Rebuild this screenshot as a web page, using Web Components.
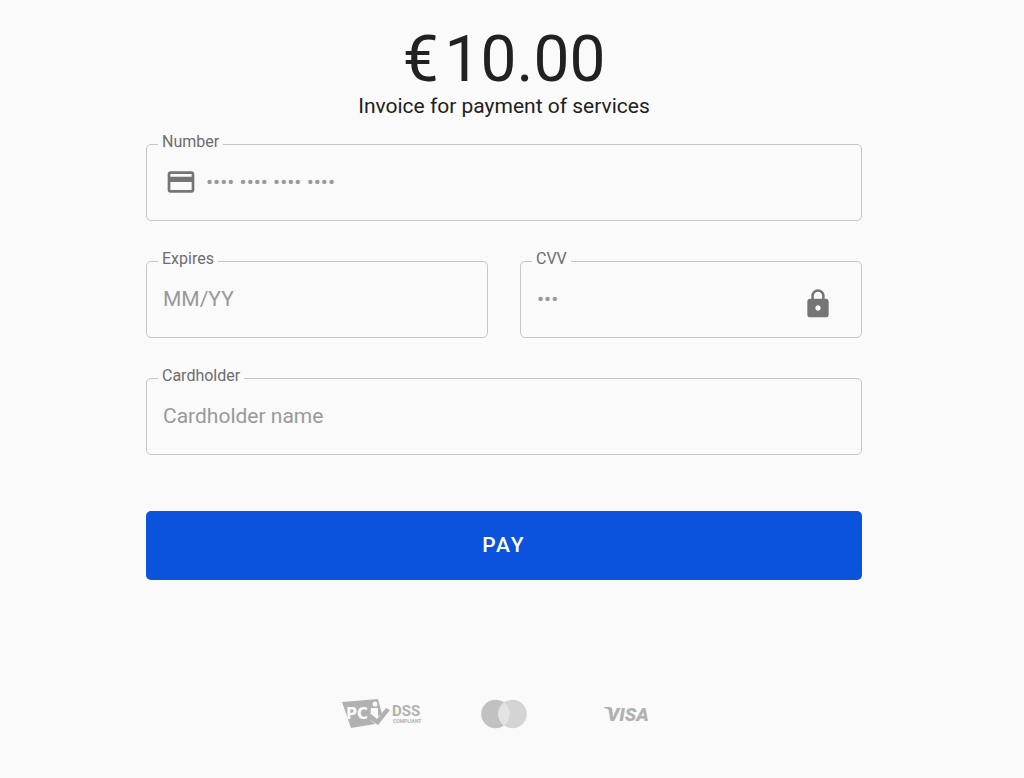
<!DOCTYPE html>
<html lang="en">
<head>
<meta charset="utf-8">
<meta name="viewport" content="width=device-width, initial-scale=1">
<title>Payment</title>
<style>
  body { margin: 0; background: #fafafa; color: #212121; font-family: Roboto, sans-serif; }
</style>
</head>
<body>
<payment-page>
  <invoice-summary slot="summary" currency="€" amount="10.00">Invoice for payment of services</invoice-summary>
  <text-field label="Number" placeholder="•••• •••• •••• ••••" class="wide" mode="numeric">
    <card-icon slot="lead"></card-icon>
  </text-field>
  <text-field label="Expires" placeholder="MM/YY" mode="numeric"></text-field>
  <text-field label="CVV" placeholder="•••" mode="numeric">
    <lock-icon slot="trail"></lock-icon>
  </text-field>
  <text-field label="Cardholder" placeholder="Cardholder name" class="wide"></text-field>
  <pay-button slot="action">PAY</pay-button>
  <brand-strip slot="brands"></brand-strip>
</payment-page>

<script>
class Base extends HTMLElement {
  constructor() {
    super();
    this.attachShadow({ mode: "open" });
  }
  connectedCallback() {
    this.shadowRoot.innerHTML = this.render();
  }
}

customElements.define("payment-page", class extends Base {
  render() {
    return `<style>
      :host { display: block; padding: 28px 32px 40px 16px; }
      main { max-width: 716px; margin: 0 auto; }
      form { display: grid; grid-template-columns: 1fr 1fr; gap: 40px 32px; margin-top: 24px; }
      ::slotted(.wide) { grid-column: 1 / -1; }
      .action { margin-top: 56px; }
      .brands { margin-top: 117px; }
    </style>
    <main>
      <slot name="summary"></slot>
      <form><slot></slot></form>
      <div class="action"><slot name="action"></slot></div>
      <div class="brands"><slot name="brands"></slot></div>
    </main>`;
  }
});

customElements.define("invoice-summary", class extends Base {
  render() {
    return `<style>
      :host { display: block; text-align: center; }
      h1 { display: flex; justify-content: center; gap: 6px; margin: 0; font-size: 64px; line-height: 64px; font-weight: 400; }
      p { margin: 0; font-size: 21px; line-height: 28px; }
    </style>
    <h1><span>${this.getAttribute("currency")}</span><span>${this.getAttribute("amount")}</span></h1>
    <p><slot></slot></p>`;
  }
});

customElements.define("text-field", class extends Base {
  render() {
    return `<style>
      :host { display: block; min-width: 0; }
      .box { position: relative; display: flex; align-items: center; box-sizing: border-box; height: 77px;
        padding: 0 16px 2px; border: 1px solid #c6c6c6; border-radius: 5px; }
      .box:focus-within { border-color: #0b53dc; }
      label { position: absolute; left: 11px; top: -13px; padding: 0 4px; background: #fafafa;
        color: #6d6d6d; font-size: 16px; line-height: 20px; }
      input { flex: 1; min-width: 0; height: 32px; padding: 0; border: 0; outline: 0; background: none;
        font: 400 21px/32px Roboto, sans-serif; color: #212121; }
      input::placeholder { color: #999; opacity: 1; }
    </style>
    <div class="box">
      <label for="field">${this.getAttribute("label")}</label>
      <slot name="lead"></slot>
      <input id="field" type="text" inputmode="${this.getAttribute("mode") || "text"}" placeholder="${this.getAttribute("placeholder")}">
      <slot name="trail"></slot>
    </div>`;
  }
});

customElements.define("card-icon", class extends Base {
  render() {
    return `<style>
      :host { display: block; margin: 0 9px 0 2px; }
      svg { display: block; fill: #757575; }
    </style>
    <svg width="32" height="32" viewBox="0 0 24 24" aria-hidden="true"><path d="M20 4H4c-1.110 0-1.990.89-1.990 2L2 18c0 1.110.89 2 2 2h16c1.110 0 2-.89 2-2V6c0-1.110-.89-2-2-2zm0 14H4v-6h16v6zm0-10H4V6h16v2z"/></svg>`;
  }
});

customElements.define("lock-icon", class extends Base {
  render() {
    return `<style>
      :host { display: block; margin: 10px 11px 0 0; }
      svg { display: block; fill: #757575; }
    </style>
    <svg width="32" height="32" viewBox="0 0 24 24" aria-hidden="true"><path d="M18 8h-1V6c0-2.760-2.240-5-5-5S7 3.240 7 6v2H6c-1.100 0-2 .9-2 2v10c0 1.100.9 2 2 2h12c1.100 0 2-.9 2-2V10c0-1.100-.9-2-2-2zm-6 9c-1.100 0-2-.9-2-2s.9-2 2-2 2 .9 2 2-.9 2-2 2zm3.100-9H8.900V6c0-1.710 1.390-3.100 3.100-3.100s3.100 1.390 3.100 3.100v2z"/></svg>`;
  }
});

customElements.define("pay-button", class extends Base {
  render() {
    return `<style>
      :host { display: block; }
      button { display: block; width: 100%; height: 69px; padding: 0 0 2px; border: 0; border-radius: 5px;
        background: #0b53dc; color: #fff; font: 500 21px/32px Roboto, sans-serif; letter-spacing: 2px; cursor: pointer; }
    </style>
    <button type="button"><slot></slot></button>`;
  }
});

customElements.define("brand-strip", class extends Base {
  render() {
    return `<style>
      :host { display: flex; justify-content: center; align-items: center; }
      div { display: flex; justify-content: center; width: 122px; }
      svg { display: block; }
    </style>
    <div><svg width="80" height="34" viewBox="0 0 80 34" role="img" aria-label="PCI DSS compliant">
      <path d="M0 5 36 2 40 17 33 27 9 31Z" fill="#b1b1b1"/>
      <text x="4" y="22" font-family="DejaVu Sans, sans-serif" font-weight="700" font-size="15" fill="#fafafa">PC</text>
      <path d="M29 11h7v8l3-1 6-9 4 3-12 18-9-7z" fill="#fafafa"/>
      <path d="M25 21 29 17 35 22 44 11 48 13 36 28Z" fill="#b1b1b1"/>
      <path d="M29 11h6v10l-4-3v-4h-2z" fill="#fafafa"/>
      <circle cx="33" cy="7" r="2.500" fill="#fafafa"/>
      <text x="50" y="19" font-family="Roboto, sans-serif" font-weight="700" font-size="15" fill="#b1b1b1">DSS</text>
      <text x="51" y="26" font-family="Roboto, sans-serif" font-weight="700" font-size="5" fill="#b1b1b1">COMPLIANT</text>
    </svg></div>
    <div><svg width="46" height="34" viewBox="0 0 46 34" role="img" aria-label="Mastercard">
      <circle cx="14.500" cy="17" r="14.300" fill="#c1c1c1"/>
      <circle cx="31.500" cy="17" r="14.300" fill="#d4d4d4"/>
      <path d="M23 5.500a14.300 14.300 0 0 1 0 23a14.300 14.300 0 0 1 0-23z" fill="#e3e3e3"/>
    </svg></div>
    <div><svg width="46" height="34" viewBox="0 0 46 34" role="img" aria-label="Visa">
      <path d="M1 10h6q2 0 2 3l1 5C8 14 6 12 1 11z" fill="#b1b1b1"/>
      <text x="4" y="24" font-family="Roboto, sans-serif" font-style="italic" font-weight="900" font-size="19" fill="#b1b1b1">VISA</text>
    </svg></div>`;
  }
});
</script>
</body>
</html>
